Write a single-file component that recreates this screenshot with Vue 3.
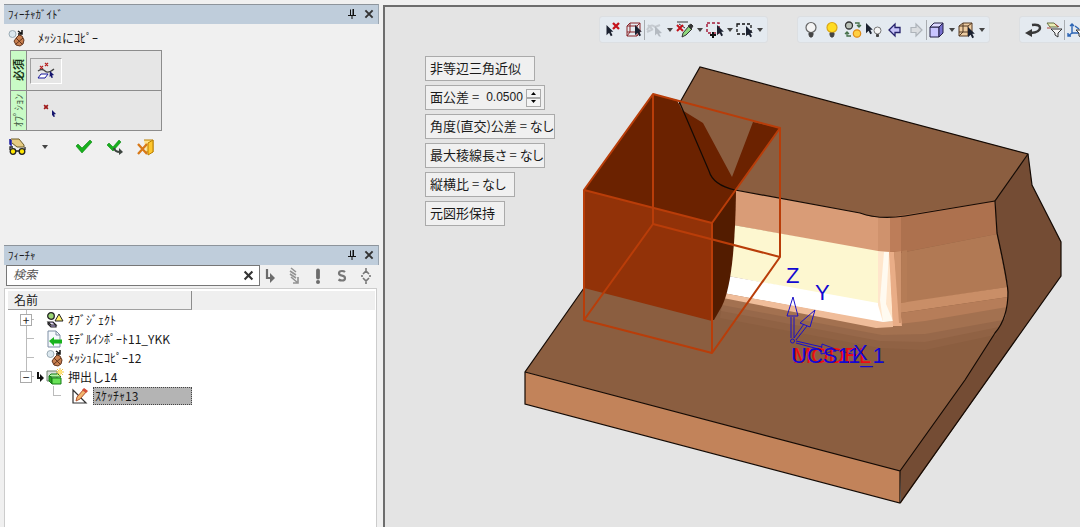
<script setup>
import { ref } from 'vue'

const search = ref('')
const tolerance = ref('0.0500')
const step = (d) => { tolerance.value = Math.max(0, Number(tolerance.value) + d * 0.01).toFixed(4) }

const toolbars = [
  [
    { icon: 'pick-clear', label: '選択解除' },
    { icon: 'pick-box', label: '要素選択' },
    { sep: true },
    { icon: 'pick-curve', label: '曲線選択', menu: true },
    { icon: 'dropper', label: '属性取得', menu: true },
    { icon: 'marquee-add', label: '範囲追加', menu: true },
    { icon: 'marquee', label: '範囲選択', menu: true }
  ],
  [
    { icon: 'bulb-off', label: '非表示' },
    { icon: 'bulb-on', label: '表示' },
    { icon: 'swap', label: '表示切替' },
    { icon: 'pick-bulb', label: '個別表示' },
    { icon: 'arrow-left', label: '戻る' },
    { icon: 'arrow-right', label: '進む' },
    { sep: true },
    { icon: 'cube', label: 'シェーディング', menu: true },
    { icon: 'cube-pick', label: '面選択', menu: true }
  ],
  [
    { icon: 'undo', label: '元に戻す' },
    { icon: 'filter', label: 'フィルタ' },
    { sep: true },
    { icon: 'axes', label: '座標系' }
  ]
]

const treeTools = [
  { icon: 'elbow', label: '移動' },
  { icon: 'zigzag', label: '更新' },
  { icon: 'bang', label: '警告' },
  { icon: 'suppress', label: '抑制' },
  { icon: 'expand', label: '展開' }
]

const tree = [
  { text: 'ｵﾌﾞｼﾞｪｸﾄ', icon: 'objects', box: '+' },
  { text: 'ﾓﾃﾞﾙｲﾝﾎﾟｰﾄ11_YKK', icon: 'import' },
  { text: 'ﾒｯｼｭにｺﾋﾟｰ12', icon: 'mesh' },
  { text: '押出し14', icon: 'extrude', box: '−', current: true },
  { text: 'ｽｹｯﾁｬ13', icon: 'sketch', child: true }
]

const faces = [
  ['525,372 584,288 679,104 700,67 1028,154 995,201 997,233 1008,287 1008,297 1005,317 995,335 966,382 901,472', '#8b5e40'],
  ['525,372 900,471 900,503 525,404', '#c2835a'],
  ['995,201 1028,154 1032,185 1061,242 1061,276 901,503 900,471 965,380 995,333 1005,317 1008,297 1008,287 997,233', '#744c34'],
  ['723,300 882,332 925,329 1006,313 995,335 925,350 880,348 720,318', '#906244'],
  ['723,299 882,329 925,326 1006,310 999,327 925,342 880,341 721,311', '#97684a'],
  ['723,297 882,323 925,319 1007,304 1003,320 925,334 882,335 722,305', '#a37150'],
  ['736,190 860,213 872,217 890,217 890,252 871,251 733,225', '#d99c77'],
  ['890,217 995,201 997,234 900,253 890,253', '#ad714e'],
  ['890,253 900,253 997,234 1007,287 900,304 890,304', '#b17954'],
  ['890,304 900,303 1007,287 1008,297 900,313 890,313', '#c98e67'],
  ['890,313 900,313 1008,297 1007,307 925,321 890,325', '#b67d59'],
  ['733,225 878,251 878,305 728,276', '#fdf7d0'],
  ['728,276 878,303 883,307 883,323 723,293', '#ffffff'],
  ['723,293 883,322 893,321 893,327 876,328 723,298', '#f0bd9a'],
  ['878,217 890,217 890,253 878,251', '#cf926d'],
  ['890,217 901,216 901,251 890,252', '#bd7d59'],
  ['878,251 890,252 893,321 883,322 878,305', '#ffe6cc'],
  ['884,252 889,252 886,304 893,321 883,322 880,300', '#fffaf0'],
  ['889,252 894,252 902,326 893,326', '#e9ad87'],
  ['894,252 901,251 901,323 899,323', '#ce936d'],
  ['902,251 907,250 907,302 901,303', '#b57c56']
]
</script>

<template>
  <svg class="sprite" aria-hidden="true">
    <symbol id="pin" viewBox="0 0 10 12"><path d="M3.500 1.500v6M1 7.500h8M5 8v3" fill="none" stroke="#111" /><path d="M5.500 1H7v7H5.500z" fill="#111" /></symbol>
    <symbol id="close" viewBox="0 0 10 10"><path d="M2 2l6 6M8 2l-6 6" stroke="#333" stroke-width="1.600" /></symbol>
    <symbol id="tri" viewBox="0 0 8 6"><path d="M1 1h6L4 5z" fill="#444" /></symbol>
    <symbol id="cur" viewBox="0 0 9 14"><path d="M1 0l8 8H6l2 4-2 1-2-4-3 3z" fill="#1b2130" /></symbol>
    <symbol id="mesh" viewBox="0 0 18 18">
      <circle cx="4.500" cy="5" r="3.500" fill="#dce8ef" stroke="#9aabb5" />
      <path d="M10 2l4 3M14 1v4h-4" fill="none" stroke="#111" stroke-width="1.500" />
      <path d="M9 8l2-2 3 1 2 4-1 4-3 2-4-1-2-4z" fill="#c98050" stroke="#61341c" />
      <path d="M8 9l6 6M15 9l-7 6" stroke="#61341c" />
    </symbol>
    <symbol id="curve-pick" viewBox="0 0 18 18">
      <path d="M3 4l3 3M6 4L3 7M8 1l3 3M11 1L8 4" stroke="#b82222" stroke-width="1.200" />
      <path d="M1 9q4-3 7 0t9-2" fill="none" stroke="#444" stroke-width="1.300" />
      <path d="M4 12h7l-3 4H1z" fill="#fff" stroke="#19199b" />
      <path d="M13 9l4 4-2 .5 1 2-1.500.5-1-2-1 1z" fill="#15156e" />
    </symbol>
    <symbol id="point-pick" viewBox="0 0 18 18"><path d="M3 3l4 4M7 3L3 7" stroke="#a01c1c" stroke-width="1.300" /><path d="M3.500 3.500h3v3h-3z" fill="#a01c1c" /><path d="M11 8l4 4-2 .5 1 2-1.500.5-1-2-.5 1z" fill="#15156e" /></symbol>
    <symbol id="glasses" viewBox="0 0 18 18">
      <path d="M2 1h8l5 6v2H8L3 5" fill="#e6cc83" stroke="#6b5a28" /><path d="M1 1v5l1 1V2" stroke="#1b1ba0" stroke-width="1.500" />
      <circle cx="4" cy="13.500" r="2.800" fill="#ffe600" stroke="#222" stroke-width="1.300" /><circle cx="13" cy="13.500" r="2.800" fill="#ffe600" stroke="#222" stroke-width="1.300" />
      <path d="M7 13h3M1 12V9h3M16 12V9" fill="none" stroke="#222" stroke-width="1.300" />
    </symbol>
    <symbol id="check" viewBox="0 0 18 18"><path d="M1 8l2-2 4 4 8-8 2 2L7 15z" fill="#17b01c" stroke="#0b8613" stroke-width=".6" /></symbol>
    <symbol id="check-next" viewBox="0 0 18 18"><path d="M1 7l2-2 4 4 6-7 2 2-8 9z" fill="#17b01c" stroke="#0b8613" stroke-width=".6" /><path d="M8 10q1 4 6 4" fill="none" stroke="#3d4540" stroke-width="2.200" /><path d="M13 10l4 4-4 3z" fill="#3d4540" /></symbol>
    <symbol id="exit" viewBox="0 0 18 18"><path d="M7 2h9v12H9" fill="#ffe28a" stroke="#bb8000" /><path d="M11 5l5-3v12l-5 3z" fill="#ffc72e" stroke="#bb8000" /><path d="M1 6l9 10M10 6l-9 10" stroke="#d87817" stroke-width="2.300" /></symbol>
    <symbol id="elbow" viewBox="0 0 16 18"><path d="M5 2v9h4" fill="none" stroke="#6c6c6c" stroke-width="2.200" /><path d="M8 6l5 5-5 5z" fill="#6c6c6c" /></symbol>
    <symbol id="zigzag" viewBox="0 0 16 18"><path d="M5 1l5 4M4 4l6 4M4 7l6 4M5 10l7 6M12 10v6H7" fill="none" stroke="#929292" stroke-width="1.600" /></symbol>
    <symbol id="bang" viewBox="0 0 16 18"><path d="M8 3.500v7" stroke="#6c6c6c" stroke-width="3.800" stroke-linecap="round" /><circle cx="8" cy="15" r="2" fill="#6c6c6c" /></symbol>
    <symbol id="suppress" viewBox="0 0 16 18"><path d="M11 5Q10 4 8 4Q5 4 5 6.300Q5 8.300 8 8.700Q11 9.200 11 11.200Q11 13.500 8 13.500Q6 13.500 4.500 12.500" fill="none" stroke="#777" stroke-width="2.200" /></symbol>
    <symbol id="expand" viewBox="0 0 16 18"><path d="M8 1v4M5 7l3-3 3 3M4 8v2M12 8v2M5 11l3 3 3-3M8 13v4" fill="none" stroke="#777" stroke-width="1.600" /></symbol>
    <symbol id="objects" viewBox="0 0 18 18"><circle cx="5" cy="5" r="3.300" fill="#9ad574" stroke="#222" stroke-width="1.300" /><path d="M13 3l4 7H9z" fill="#fff06b" stroke="#222" /><path d="M2 11h5l3 3H5zM2 11v2l3 3h5v-2" fill="#c5b1ec" stroke="#222" stroke-width="1.200" /></symbol>
    <symbol id="import" viewBox="0 0 18 18"><path d="M2 1h8l4 4v12H2z" fill="#f5f8fc" stroke="#7e8fa5" /><path d="M10 1v4h4" fill="none" stroke="#7e8fa5" /><path d="M3 11l5-4v2.500h8v4H8V16z" fill="#19b31d" /></symbol>
    <symbol id="extrude" viewBox="0 0 18 18"><path d="M1 3h10v10H1z" fill="#d9ded9" stroke="#718071" /><path d="M3 8l2-2h7l3 3H6z" fill="#b6f5a8" stroke="#167d17" /><path d="M3 8l3 2v6l-3-3z" fill="#2ba422" stroke="#167d17" /><path d="M6 10h9v6H6z" fill="#69e257" stroke="#167d17" /><path d="M14 0v8M10 4h8M11 1l6 6M17 1l-6 6" stroke="#f5c63e" /><circle cx="14" cy="4" r="2" fill="#ffe477" /></symbol>
    <symbol id="sketch" viewBox="0 0 18 18"><path d="M2 3v13h13z" fill="#fff" stroke="#333" stroke-width="1.200" /><path d="M13 2l3 2-7 8-4 2 1-4z" fill="#f2b66e" stroke="#b2532d" /><path d="M13 1l4 3-2 2-4-3z" fill="#d44e3a" /></symbol>
    <symbol id="pick-clear" viewBox="0 0 18 18"><use href="#cur" x="1" y="4" width="9" height="12" /><path d="M9 2l6 6M15 2l-6 6" stroke="#c4121b" stroke-width="2.300" /></symbol>
    <symbol id="pick-box" viewBox="0 0 18 18"><path d="M2 5h10v10H2zM2 5l3-3h10l-3 3M15 2v9l-3 4M5 2v9H2M5 11h10M5 11l-3 4" fill="none" stroke="#8a2429" /><use href="#cur" x="9" y="4" width="8" height="12" /></symbol>
    <symbol id="pick-curve" viewBox="0 0 18 18"><path d="M1 9q4-7 8-3l5-2M2 4l4 4M1 11l6-3" fill="none" stroke="#c5cad0" stroke-width="2" /><path d="M9 5l7 7-3 .5 2 3h-2l-2-3-2 2z" fill="#b4bac1" /></symbol>
    <symbol id="dropper" viewBox="0 0 18 18"><path d="M1 1h11M3 3l6 4" stroke="#333" /><path d="M1 4l6 6M7 4l-6 6" stroke="#c4121b" stroke-width="2" /><path d="M13 5l-6 7-1 4 4-2 6-6z" fill="#8ed77b" stroke="#333" /><path d="M12 5l3-2 2 2-2 3z" fill="#333" stroke="#333" /></symbol>
    <symbol id="marquee-add" viewBox="0 0 18 18"><path d="M1 2h12v10H1z" fill="none" stroke="#a51e3b" stroke-width="1.500" stroke-dasharray="3 2" /><path d="M7 11v6M4 14h6" stroke="#111" stroke-width="2" /><use href="#cur" x="10" y="4" width="8" height="12" /></symbol>
    <symbol id="marquee" viewBox="0 0 18 18"><path d="M1 3h14v10H1z" fill="none" stroke="#111" stroke-width="1.300" stroke-dasharray="3 2" /><use href="#cur" x="9" y="5" width="8" height="12" /></symbol>
    <symbol id="bulb-off" viewBox="0 0 18 18"><circle cx="9" cy="6.500" r="5" fill="#f4f4f4" stroke="#666" stroke-width="1.200" /><path d="M7 12h4v2l-1 2H8l-1-2z" fill="#444" stroke="#444" /></symbol>
    <symbol id="bulb-on" viewBox="0 0 18 18"><circle cx="9" cy="6.500" r="5" fill="#ffdc22" stroke="#dba716" stroke-width="1.200" /><path d="M7 12h4v2l-1 2H8l-1-2z" fill="#444" stroke="#444" /></symbol>
    <symbol id="swap" viewBox="0 0 18 18"><circle cx="5" cy="4.500" r="3.500" fill="#bac2b8" stroke="#333" stroke-width="1.300" /><circle cx="13" cy="12.500" r="3.700" fill="#ffd043" stroke="#df8a16" stroke-width="1.200" /><path d="M11 2h4v4M13 4l2 2 2-2M7 15H3v-4M1 13l2-2 2 2" fill="none" stroke="#457049" stroke-width="1.300" /></symbol>
    <symbol id="pick-bulb" viewBox="0 0 18 18"><use href="#cur" x="0" y="2" width="8" height="12" /><circle cx="12.500" cy="9.500" r="3.500" fill="#f4f4f4" stroke="#777" /><path d="M11.500 13.500h2v2h-2z" fill="#444" stroke="#444" /></symbol>
    <symbol id="arrow-left" viewBox="0 0 18 18"><path d="M3 9l6-6v3.500h5v5H9V15z" fill="#c7c4f8" stroke="#26226b" stroke-width="1.300" /></symbol>
    <symbol id="arrow-right" viewBox="0 0 18 18"><path d="M15 9L9 3v3.500H4v5h5V15z" fill="#dadde0" stroke="#aeb4ba" stroke-width="1.200" /></symbol>
    <symbol id="cube" viewBox="0 0 18 18"><path d="M2 6h9v10H2z" fill="#c9c5ff" stroke="#252047" /><path d="M2 6l4-4h9l-4 4z" fill="#ddd9ff" stroke="#252047" /><path d="M11 6l4-4v10l-4 4z" fill="#7770cf" stroke="#252047" /></symbol>
    <symbol id="cube-pick" viewBox="0 0 18 18"><path d="M1 5l4-3h9v9l-4 4H1z" fill="#edcca1" stroke="#553b24" /><path d="M1 5h9v10M10 5l4-3M5 2v9H1M5 11h9M5 11l-4 4" fill="none" stroke="#553b24" /><use href="#cur" x="9" y="6" width="8" height="12" /></symbol>
    <symbol id="undo" viewBox="0 0 18 18"><path d="M8 4q8-1 8 3t-9 5" fill="none" stroke="#383838" stroke-width="2.500" /><path d="M1 12l7-4v8z" fill="#383838" /></symbol>
    <symbol id="filter" viewBox="0 0 18 18"><path d="M2 2h7l4 4H5z" fill="#e9edb4" stroke="#667044" /><path d="M6 8h11l-4 4v4l-3-2v-2z" fill="#f4f4f4" stroke="#333" /><path d="M2 7h4M10 3l4 3" stroke="#af4438" /></symbol>
    <symbol id="axes" viewBox="0 0 18 18"><path d="M5 12V3M3 5l2-2 2 2M5 12h7M5 12l-4 3M1 12v3h3M8 5l4 3" fill="none" stroke="#2c65b5" stroke-width="1.400" /><path d="M9 9h8l-3 3v4l-2-1v-3z" fill="#fff" stroke="#333" /></symbol>
  </svg>

  <div class="app">
    <aside class="side">
      <section class="panel guide">
        <header class="title">
          <h2>ﾌｨｰﾁｬｶﾞｲﾄﾞ</h2>
          <button type="button" aria-label="固定"><svg width="10" height="12"><use href="#pin" /></svg></button>
          <button type="button" aria-label="閉じる"><svg width="12" height="12"><use href="#close" /></svg></button>
        </header>
        <div class="command">
          <svg width="18" height="18"><use href="#mesh" /></svg>
          <span>ﾒｯｼｭにｺﾋﾟｰ</span>
        </div>
        <div class="inputs">
          <div class="input-row">
            <div class="tag must">必須</div>
            <button type="button" class="slot pressed" aria-label="面を選択"><svg width="18" height="18"><use href="#curve-pick" /></svg></button>
          </div>
          <div class="input-row">
            <div class="tag">ｵﾌﾟｼｮﾝ</div>
            <button type="button" class="slot wide" aria-label="点を選択"><svg width="18" height="18"><use href="#point-pick" /></svg></button>
          </div>
        </div>
        <div class="actions">
          <button type="button" aria-label="プレビュー"><svg width="18" height="18"><use href="#glasses" /></svg></button>
          <button type="button" class="drop" aria-label="プレビュー設定"><svg width="8" height="6"><use href="#tri" /></svg></button>
          <button type="button" aria-label="決定"><svg width="18" height="18"><use href="#check" /></svg></button>
          <button type="button" aria-label="適用"><svg width="18" height="18"><use href="#check-next" /></svg></button>
          <button type="button" aria-label="終了"><svg width="18" height="18"><use href="#exit" /></svg></button>
        </div>
      </section>

      <section class="panel features">
        <header class="title">
          <h2>ﾌｨｰﾁｬ</h2>
          <button type="button" aria-label="固定"><svg width="10" height="12"><use href="#pin" /></svg></button>
          <button type="button" aria-label="閉じる"><svg width="12" height="12"><use href="#close" /></svg></button>
        </header>
        <div class="search-row">
          <div class="search">
            <input v-model="search" type="text" placeholder="検索" aria-label="検索">
            <button type="button" aria-label="クリア" @click="search = ''"><svg width="13" height="13"><use href="#close" /></svg></button>
          </div>
          <div class="tree-tools">
            <button v-for="t in treeTools" :key="t.icon" type="button" :aria-label="t.label"><svg width="16" height="18"><use :href="'#' + t.icon" /></svg></button>
          </div>
        </div>
        <div class="tree-box">
          <div class="tree-head"><span>名前</span></div>
          <ul class="tree">
            <li v-for="n in tree" :key="n.text" :class="{ child: n.child }">
              <span class="branch"><button v-if="n.box" type="button" :aria-label="n.text + ' 開閉'">{{ n.box }}</button></span>
              <span class="mark"><svg v-if="n.current" width="8" height="12" viewBox="0 0 8 12"><path d="M2 1v6h3" fill="none" stroke="#111" stroke-width="2" /><path d="M4 3l4 4-4 4z" fill="#111" /></svg></span>
              <svg class="node-icon" width="18" height="18"><use :href="'#' + n.icon" /></svg>
              <span class="node-text">{{ n.text }}</span>
            </li>
          </ul>
        </div>
      </section>
    </aside>

    <main class="view">
      <svg class="scene" viewBox="385 7 695 520" preserveAspectRatio="xMinYMin meet" role="img" aria-label="3Dモデル">
        <polygon v-for="(f, i) in faces" :key="i" :points="f[0]" :fill="f[1]" />
        <g fill="none" stroke="#140a04" stroke-width="1.200">
          <path d="M584 288L525 372V404L900 503L1061 276V242L1032 185L1028 154L700 67L679 104" />
          <path d="M525 372L900 471V503M900 471L965 380L995 333Q1008 318 1008 292Q1007 278 997 233L995 201L1028 154" />
          <path d="M735 190L860 213Q879 220 905 216L995 201" />
        </g>
        <polygon points="584,190 653,94 677,100 682,110 703,123 732,177 753,122 780,128 712,223" fill="#6b2200" />
        <polygon points="584,190 712,223 712,321 584,288" fill="#923208" />
        <path d="M712 223L736 190Q735 280 722 306L714 320H712z" fill="#531c00" />
        <path d="M679 101L709 171Q713 185 735 190" fill="none" stroke="#140a04" stroke-width="1.200" />
        <g fill="none" stroke="#b93d09" stroke-width="2" stroke-linejoin="round">
          <path d="M584 190L653 94L780 128L712 223zM584 320L653 224L780 257L712 353z" />
          <path d="M584 190V320M653 94V224M780 128V257M712 223V353" />
        </g>
        <g fill="none" stroke="#1a10c8" stroke-width="1">
          <circle cx="792.500" cy="341" r="2" />
          <path d="M791 338V317M794 338V317M787 316H798L793 297zM794 338L804 324M796 340L807 326M800 323L810 327L815 310zM796 341L822 347M796 343L822 350M822 344L838 350L821 354zM838 350L858 356" />
        </g>
        <g class="axis-text" fill="#1208d2">
          <text x="793" y="363" fill="#ee0a12">MODEL</text>
          <text x="791" y="363">UCS11_1</text>
          <text x="786" y="283">Z</text>
          <text x="815" y="300">Y</text>
          <text x="853" y="360">X</text>
        </g>
      </svg>

      <div class="toolbars">
        <div v-for="(bar, b) in toolbars" :key="b" class="bar" role="toolbar">
          <template v-for="(t, i) in bar" :key="i">
            <span v-if="t.sep" class="sep"></span>
            <button v-else type="button" :class="{ menu: t.menu }" :aria-label="t.label">
              <svg width="18" height="18"><use :href="'#' + t.icon" /></svg>
              <svg v-if="t.menu" class="caret" width="8" height="6"><use href="#tri" /></svg>
            </button>
          </template>
        </div>
      </div>

      <div class="params">
        <button type="button" class="param w110">非等辺三角近似</button>
        <div class="param w120">
          <label for="tol">面公差 =</label>
          <input id="tol" v-model="tolerance" type="text">
          <span class="spin">
            <button type="button" aria-label="増やす" @click="step(1)"><svg width="7" height="4" viewBox="0 0 7 4"><path d="M1 4h5L3.500 1z" /></svg></button>
            <button type="button" aria-label="減らす" @click="step(-1)"><svg width="7" height="4" viewBox="0 0 7 4"><path d="M1 0h5L3.500 3z" /></svg></button>
          </span>
        </div>
        <button type="button" class="param w130">角度(直交)公差 = なし</button>
        <button type="button" class="param w120">最大稜線長さ = なし</button>
        <button type="button" class="param w90">縦横比 = なし</button>
        <button type="button" class="param w80">元図形保持</button>
      </div>
    </main>
  </div>
</template>

<style>
body { background: #f0f0f0; }
</style>

<style scoped>
* { box-sizing: border-box; }
.sprite { position: absolute; width: 0; height: 0; }
.app {
  display: flex;
  min-height: 100vh;
  color: #1a1a1a;
  font: 12px/16px "Noto Sans CJK JP", sans-serif;
  background: #f0f0f0;
}
svg { display: block; flex: none; }
button {
  display: flex;
  align-items: center;
  justify-content: center;
  padding: 0;
  border: 0;
  background: none;
  color: inherit;
  font: inherit;
}
.side { display: flex; flex: 0 1 383px; flex-direction: column; padding: 4px 4px 0 4px; }
.panel { display: flex; flex-direction: column; }
.guide { min-height: 241px; }
.features { flex: 1; }
.title {
  display: flex;
  align-items: center;
  gap: 6px;
  height: 20px;
  padding: 0 3px 2px 4px;
  border-top: 1px solid #8d949b;
  border-right: 1px solid #9aa5b0;
  background: #bfcddb;
}
.title h2 { flex: 1; margin: 0; font-size: 11px; font-weight: 400; }
.command { display: flex; align-items: center; gap: 12px; height: 26px; padding: 2px 4px 0; }
.inputs { width: 152px; margin-left: 6px; border: 1px solid #8c8c8c; background: #e6e6e6; }
.input-row { display: flex; align-items: center; height: 39px; }
.input-row + .input-row { height: 40px; border-top: 1px solid #8c8c8c; }
.tag {
  align-self: stretch;
  width: 16px;
  border-left: 1px solid #8c8c8c;
  background: #c9fbc6;
  color: #4b654b;
  font-size: 11px;
  line-height: 15px;
  text-align: center;
  writing-mode: vertical-rl;
  text-orientation: sideways;
  transform: rotate(180deg);
}
.must { color: #173317; font-weight: 700; }
.slot { width: 32px; height: 26px; margin-left: 3px; border: 1px solid transparent; }
.wide { width: 40px; }
.pressed { border-color: #a0a0a0 #fff #fff #a0a0a0; }
.actions { display: flex; align-items: center; gap: 13px; margin-top: 7px; padding-left: 5px; }
.drop { width: 10px; }
.drop + button { margin-left: 12px; }

.search-row { display: flex; align-items: center; gap: 2px; padding-left: 2px; }
.search { display: flex; flex: 1; height: 21px; border: 1px solid #777; background: #fff; }
.search input {
  flex: 1;
  min-width: 0;
  padding: 0 6px 3px;
  border: 0;
  outline: 0;
  background: none;
  font: italic 12px/16px "Noto Sans CJK JP", sans-serif;
}
.search input::placeholder { color: #555; opacity: 1; }
.search button { width: 22px; }
.tree-tools { display: flex; gap: 8px; padding-right: 5px; }
.tree-box { flex: 1; margin: 2px 2px 0 0; padding: 2px 1px 0 3px; border: 1px solid #ccc; border-bottom: 0; background: #fff; }
.tree-head { background: #efefef; }
.tree-head span {
  display: block;
  width: 184px;
  padding: 1px 6px;
  border-right: 1px solid #8c8c8c;
  border-bottom: 1px solid #a0a0a0;
}
.tree { margin: 0; padding: 0 0 0 12px; list-style: none; }
.tree li { display: flex; align-items: center; height: 19px; }
.branch {
  display: flex;
  align-items: center;
  align-self: stretch;
  width: 14px;
  background: linear-gradient(#bbb, #bbb) 6px 0 / 1px 100% no-repeat, linear-gradient(#bbb, #bbb) 6px 9px / 8px 1px no-repeat;
}
li:nth-child(4) .branch { background-size: 1px 9px, 8px 1px; }
.branch button { width: 12px; height: 12px; border: 1px solid #aaa; background: #fff; line-height: 10px; }
.mark { display: flex; justify-content: center; width: 12px; }
.node-icon { margin-right: 3px; }
.node-text { padding: 0 1px; }
.child .branch { margin-left: 27px; background-size: 1px 9px, 8px 1px; }
.child .mark { width: 0; }
.child .node-icon { margin-left: 10px; margin-right: 4px; }
.child .node-text { width: 99px; border: 1px dotted #444; background: #b4b4b4; }

.view {
  position: relative;
  flex: 1;
  min-width: 0;
  margin-top: 5px;
  border: solid #6d6d6d;
  border-width: 2px 0 0 2px;
  background: #e4e4e4;
  overflow: hidden;
}
.scene { width: 100%; height: auto; }
.axis-text { font: 22px "Liberation Sans", sans-serif; }
.toolbars { position: absolute; top: 10px; left: 31%; display: flex; gap: 31px; }
.bar {
  display: flex;
  align-items: center;
  height: 25px;
  padding: 0 2px;
  border-radius: 2px;
  background: #e4eaf0;
  outline: 1px solid #dcdfe2;
}
.bar button { width: 21px; height: 23px; }
.bar .menu { width: 30px; gap: 2px; }
.sep { width: 1px; height: 20px; background: #a8acb0; }
.params {
  position: absolute;
  top: 49px;
  left: 40px;
  display: flex;
  flex-direction: column;
  align-items: flex-start;
  gap: 4px;
}
.param {
  display: flex;
  align-items: center;
  justify-content: flex-start;
  height: 25px;
  padding: 0 0 2px 4px;
  border: 1px solid #aaa;
  background: #f0f0f0;
  font-size: 13px;
  font-feature-settings: "palt";
  white-space: nowrap;
}
.w80 { min-width: 80px; }
.w90 { min-width: 90px; }
.w110 { min-width: 110px; }
.w120 { min-width: 120px; }
.w130 { min-width: 130px; }
.param input {
  width: 45px;
  padding: 0 0 0 7px;
  border: 0;
  background: none;
  color: inherit;
  font: 12px/16px "Liberation Sans", sans-serif;
}
.spin { display: flex; flex-direction: column; margin: 2px 3px 0 auto; }
.spin button { width: 15px; height: 9px; border: 1px solid #aaa; background: #f4f4f4; }
</style>
